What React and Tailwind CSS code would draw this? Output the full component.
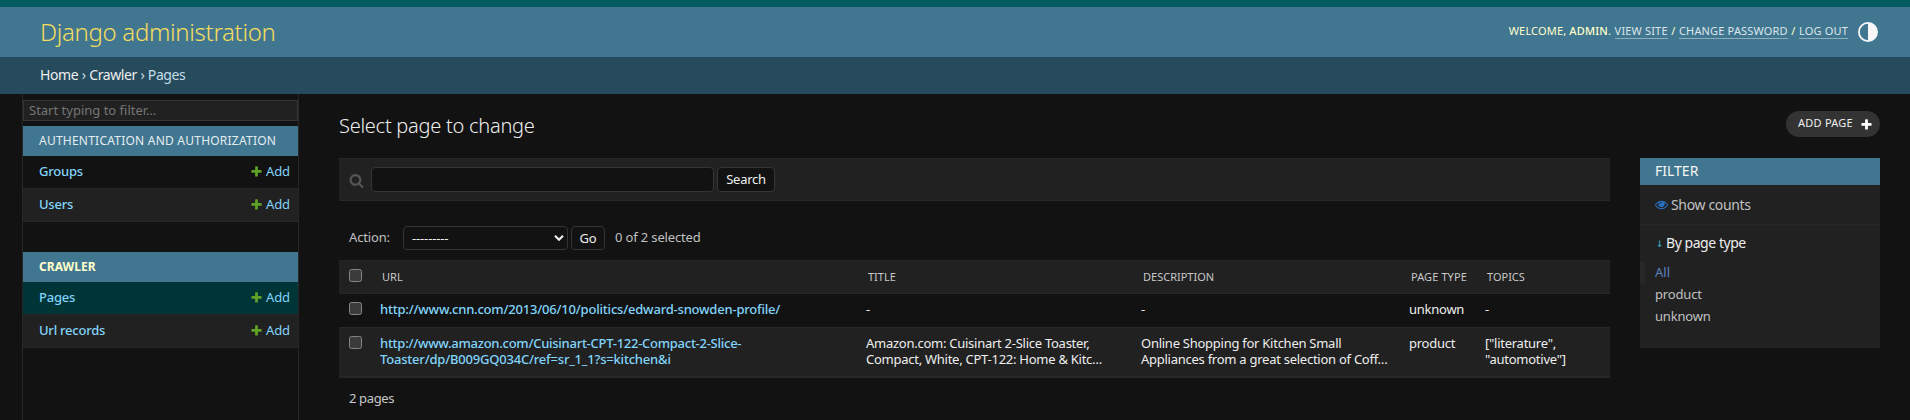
const Plus = ({ color }) => (
  <svg width="13" height="13" viewBox="0 0 1792 1792" fill={color} className="shrink-0">
    <path d="M1600 796v192q0 40-28 68t-68 28h-416v416q0 40-28 68t-68 28h-192q-40 0-68-28t-28-68v-416h-416q-40 0-68-28t-28-68v-192q0-40 28-68t68-28h416v-416q0-40 28-68t68-28h192q40 0 68 28t28 68v416h416q40 0 68 28t28 68z" />
  </svg>
);

const Box = () => (
  <span className="block h-[13px] w-[13px] rounded-[2.5px] border border-[#858585] bg-[#3b3b3b]" />
);

const ModelRow = ({ name, className }) => (
  <div className={`flex h-[33px] items-start justify-between border-b border-[#272727] pt-[7px] pr-2 pl-4 text-[13px] leading-[17px] font-medium tracking-[-0.22px] text-[#81d4fa] ${className}`}>
    <span>{name}</span>
    <a className="flex items-center gap-[3px] font-normal tracking-[-0.1px]">
      <Plus color="#5fa225" />
      Add
    </a>
  </div>
);

const UserLink = ({ children }) => (
  <a className="border-b border-white/40 leading-[15px] text-[#dce6ec]">{children}</a>
);

const GRID = "grid grid-cols-[41px_486px_275px_268px_76px_125px] border-[#272727]";

export default function App() {
  return (
    <div className="flex h-[420px] w-full flex-col overflow-hidden bg-[#121212] font-['Noto_Sans',sans-serif] text-[13px] leading-4 text-[#eeeeee]">
      <div className="h-[7px] shrink-0 bg-[#035b60]" />
      <header className="flex h-[50px] shrink-0 items-center justify-between bg-[#417690] pr-8 pl-10">
        <h1 className="pb-px text-[24px] leading-8 font-light tracking-[-0.32px] text-[#f5dd5d]">Django administration</h1>
        <div className="flex items-center text-[11px] tracking-[0.17px] text-[#ffffcc]">
          <div className="flex gap-[3.5px] pb-[2px]">
            <span>WELCOME, <b className="font-medium">ADMIN</b>.</span>
            <UserLink>VIEW SITE</UserLink>
            <span>/</span>
            <UserLink>CHANGE PASSWORD</UserLink>
            <span>/</span>
            <UserLink>LOG OUT</UserLink>
          </div>
          <svg width="20" height="20" viewBox="0 0 20 20" className="ml-[10px]">
            <circle cx="10" cy="10" r="9.1" fill="none" stroke="#f7f7f7" strokeWidth="1.8" />
            <path d="M10 1a9 9 0 0 1 0 18z" fill="#f7f7f7" />
          </svg>
        </div>
      </header>
      <nav className="flex h-[37px] shrink-0 items-center gap-[3.5px] bg-[#264b5d] pb-[2px] pl-10 text-[14px] tracking-[-0.4px] text-[#c4dce8]">
        <a className="text-[#eeeeee]">Home</a><span>›</span><a className="text-[#eeeeee]">Crawler</a><span>›</span><span>Pages</span>
      </nav>

      <div className="flex grow">
        <aside className="ml-[22px] w-[277px] shrink-0 border-x border-[#272727] pt-[6px]">
          <div className="h-[21px] border border-[#353535] bg-[#212121] pl-[5px] text-[13px] leading-[18px] text-[#757575]">Start typing to filter…</div>
          <div className="mt-[5px] h-[30px] bg-[#417690] pl-4 text-[12px] leading-[29px] tracking-[0.23px] text-[#e4edf2]">AUTHENTICATION AND AUTHORIZATION</div>
          <ModelRow name="Groups" />
          <ModelRow name="Users" className="bg-[#212121]" />
          <div className="mt-[30px] h-[30px] bg-[#417690] pl-4 text-[12px] leading-[29px] font-bold tracking-[0.05px] text-[#ffffcc]">CRAWLER</div>
          <ModelRow name="Pages" className="bg-[#003538]" />
          <ModelRow name="Url records" className="bg-[#212121]" />
        </aside>

        <main className="flex grow flex-col pr-[30px] pl-10">
          <div className="flex h-16 shrink-0 items-start justify-between">
            <h2 className="pt-5 text-[20px] leading-6 font-light tracking-[-0.26px]">Select page to change</h2>
            <a className="mt-[17px] flex h-[26px] w-[94px] items-center justify-between rounded-full bg-[#333333] pr-[7px] pl-3 text-[11px] tracking-[0.25px]">
              <span className="pb-[2px]">ADD PAGE</span>
              <Plus color="#ffffff" />
            </a>
          </div>
          <div className="flex items-start gap-[30px]">
            <section className="w-[1271px] shrink-0">
              <div className="flex h-[43px] items-center border-y border-[#272727] bg-[#212121] pl-[10px]">
                <svg width="15" height="15" viewBox="0 0 1792 1792" fill="#555555" className="mt-px">
                  <path d="M1216 832q0-185-131.500-316.500t-316.500-131.500-316.500 131.500-131.500 316.500 131.500 316.500 316.500 131.500 316.500-131.500 131.500-316.500zm512 832q0 52-38 90t-90 38q-54 0-90-38l-343-342q-179 124-399 124-143 0-273.500-55.500t-225-150-150-225-55.500-273.500 55.500-273.500 150-225 225-150 273.500-55.500 273.500 55.500 225 150 150 225 55.500 273.500q0 220-124 399l343 343q37 37 37 90z" />
                </svg>
                <div className="ml-[7px] h-[25px] w-[343px] rounded-[4px] border border-[#353535] bg-[#121212]" />
                <button className="ml-[3px] h-[25px] w-[58px] rounded-[4px] border border-[#353535] bg-[#121212] pb-px text-[13px] leading-[22px] tracking-[-0.25px]">Search</button>
              </div>
              <div className="flex h-[59px] items-start pt-[25px] pl-[10px] leading-[22px] tracking-[-0.15px] text-[#c0c0c0]">
                <span className="w-[54px]">Action:</span>
                <div className="flex h-6 w-[165px] items-center justify-between rounded-[4px] border border-[#353535] bg-[#121212] pr-[3px] pl-2 text-[#eeeeee]">
                  <span>---------</span>
                  <svg width="10" height="8" viewBox="0 0 10 8" fill="none" stroke="#eeeeee" strokeWidth="2.2"><path d="M1 1.8l4 4 4-4" /></svg>
                </div>
                <button className="ml-[3px] h-6 w-[34px] rounded-[4px] border border-[#353535] bg-[#121212] text-[#eeeeee]">Go</button>
                <span className="ml-[10px]">0 of 2 selected</span>
              </div>
              <div className={`${GRID} h-[34px] border-y bg-[#212121] pt-[8px] text-[11px] text-[#c8c8c8]`}>
                <span className="pl-[10px]"><Box /></span>
                <span className="pl-[2px]">URL</span><span className="pl-[2px]">TITLE</span><span className="pl-[2px]">DESCRIPTION</span><span className="pl-[2px] tracking-[0.1px]">PAGE TYPE</span><span className="pl-[2px]">TOPICS</span>
              </div>
              <div className={`${GRID} h-[33px] pt-[7px] tracking-[-0.25px]`}>
                <span className="pt-px pl-[10px]"><Box /></span>
                <a className="font-medium tracking-[-0.2px] text-[#81d4fa]">http://www.cnn.com/2013/06/10/politics/edward-snowden-profile/</a>
                <span>-</span><span>-</span><span>unknown</span><span>-</span>
              </div>
              <div className={`${GRID} h-[51px] border-t border-b-2 bg-[#212121] pt-[7px] tracking-[-0.26px]`}>
                <span className="pt-px pl-[10px]"><Box /></span>
                <a className="font-medium text-[#81d4fa]">http://www.amazon.com/Cuisinart-CPT-122-Compact-2-Slice-<br /><span className="tracking-[-0.2px]">Toaster/dp/B009GQ034C/ref=sr_1_1?s=kitchen&amp;i</span></a>
                <span>Amazon.com: Cuisinart 2-Slice Toaster,<br />Compact, White, CPT-122: Home &amp; Kitc…</span>
                <span>Online Shopping for Kitchen Small<br />Appliances from a great selection of Coff…</span>
                <span>product</span>
                <span>["literature",<br />"automotive"]</span>
              </div>
              <div className="pt-[12px] pl-[10px] tracking-[-0.35px] text-[#c8c8c8]">2 pages</div>
            </section>
            <aside className="h-[190px] grow bg-[#212121] text-[#c0c0c0]">
              <h3 className="h-[27px] bg-[#417690] pl-[15px] text-[14px] leading-[26px] text-[#f5f5f5]">FILTER</h3>
              <div className="flex h-10 items-center gap-[3px] border-b border-[#272727] pl-[15px] text-[14px] tracking-[-0.35px]">
                <svg width="13" height="13" viewBox="0 0 1792 1792" fill="#2b70c0">
                  <path d="M1664 960q-152-236-381-353 61 104 61 225 0 185-131.500 316.500t-316.500 131.500-316.500-131.500-131.500-316.500q0-121 61-225-229 117-381 353 133 205 333.500 326.500t434.500 121.500 434.500-121.500 333.500-326.500zm-720-384q0-20-14-34t-34-14q-125 0-214.500 89.500t-89.500 214.500q0 20 14 34t34 14 34-14 14-34q0-86 61-147t147-61q20 0 34-14t14-34zm848 384q0 34-20 69-140 230-376.500 368.500t-499.500 138.500-499.500-139-376.500-368q-20-35-20-69t20-69q140-229 376.500-368t499.500-139 499.500 139 376.500 368q20 35 20 69z" />
                </svg>
                Show counts
              </div>
              <h4 className="flex h-[37px] items-center pb-px pl-[15px] text-[14px] tracking-[-0.45px] text-[#eeeeee]"><span className="w-[11px] pl-px font-['DejaVu_Sans_Mono',monospace] text-[12px] text-[#3aa6c4]">↓</span>By page type</h4>
              <div className="h-[22px] border-l-[5px] border-[#272727] pl-[10px] leading-5 text-[#5b82c0]">All</div>
              <div className="h-[22px] pl-[15px] leading-5 tracking-[-0.15px]">product</div>
              <div className="h-[22px] pl-[15px] leading-5 tracking-[-0.2px]">unknown</div>
            </aside>
          </div>
        </main>
      </div>
    </div>
  );
}
